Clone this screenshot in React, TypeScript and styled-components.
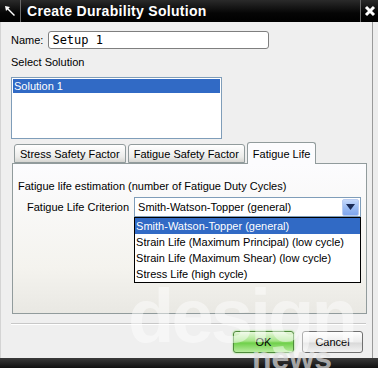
import React from "react";
import styled, { createGlobalStyle } from "styled-components";

const Global = createGlobalStyle`
  html, body { margin: 0; padding: 0; background: #ededed; }
  body { font-family: "Liberation Sans", Arial, sans-serif; }
`;

const Window = styled.div`
  position: relative;
  width: 378px;
  height: 368px;
  display: flex;
  flex-direction: column;
  overflow: hidden;
  background: #ededed;
  font-family: "Liberation Sans", Arial, sans-serif;
  font-size: 11px;
  color: #000;
`;

const TitleBar = styled.div`
  height: 22px;
  flex: none;
  display: flex;
  align-items: center;
  background: linear-gradient(#2a2a2a, #050505 60%, #000);
  color: #fff;
`;

const TitleIcon = styled.div`
  width: 20px;
  height: 22px;
  display: flex;
  align-items: center;
  justify-content: center;
  border-right: 1px solid #6a6a6a;
`;

const TitleText = styled.div`
  flex: 1;
  padding-left: 6px;
  font-family: "Liberation Sans", Arial, sans-serif;
  font-weight: bold;
  font-size: 14px;
  letter-spacing: 0.3px;
`;

const CloseBox = styled.div`
  width: 17px;
  height: 22px;
  display: flex;
  align-items: center;
  justify-content: center;
  border-left: 1px solid #6a6a6a;
`;

const Body = styled.div`
  flex: 1;
  display: flex;
  flex-direction: column;
  padding: 9px 0 0 10px;
  margin-right: 5px;
  border-left: 1px solid #d4d4d4;
  border-right: 1px solid #9a9a9a;
  background: #efefef;
`;

const Row = styled.div<{ $top?: number; $left?: number; $gap?: number }>`
  display: flex;
  align-items: center;
  gap: ${(p) => p.$gap ?? 4}px;
  margin-top: ${(p) => p.$top ?? 0}px;
  margin-left: ${(p) => p.$left ?? 0}px;
`;

const NameInput = styled.div`
  width: 216px;
  height: 16px;
  margin-left: 1px;
  border: 1px solid #7f7f7f;
  border-radius: 3px;
  background: #fff;
  font-family: "DejaVu Sans Mono", "Liberation Mono", monospace;
  font-size: 12px;
  line-height: 16px;
  padding-left: 3px;
`;

const Label = styled.div<{ $top?: number }>`
  margin-top: ${(p) => p.$top ?? 0}px;
  white-space: nowrap;
`;

const ListBox = styled.div`
  width: 207px;
  height: 58px;
  margin-top: 9px;
  border: 1px solid #7f9db9;
  background: #fff;
  padding: 1px;
`;

const ListItem = styled.div<{ $selected?: boolean }>`
  height: 14px;
  line-height: 14px;
  padding-left: 1px;
  background: ${(p) => (p.$selected ? "#316ac5" : "transparent")};
  color: ${(p) => (p.$selected ? "#fff" : "#000")};
`;

const TabStrip = styled.div`
  display: flex;
  align-items: flex-end;
  height: 21px;
  margin-top: 3px;
  padding-left: 3px;
  gap: 2px;
`;

const Tab = styled.div<{ $active?: boolean }>`
  height: ${(p) => (p.$active ? 21 : 17)}px;
  padding: 0 5px;
  display: flex;
  align-items: center;
  border: 1px solid #919b9c;
  border-bottom: ${(p) => (p.$active ? "none" : "1px solid #919b9c")};
  border-radius: 3px 3px 0 0;
  background: ${(p) =>
    p.$active ? "#fcfcfe" : "linear-gradient(#ffffff, #ececea 70%, #d6d6d2)"};
  margin-bottom: ${(p) => (p.$active ? -1 : 0)}px;
  position: relative;
  z-index: ${(p) => (p.$active ? 2 : 1)};
`;

const Panel = styled.div`
  position: relative;
  width: 355px;
  height: 151px;
  margin-left: 1px;
  border: 1px solid #919b9c;
  background: linear-gradient(#fcfcfe, #f4f3ee 70%, #e9e8e3);
  padding: 16px 0 0 5px;
  box-sizing: border-box;
`;

const ComboWrap = styled.div`
  position: relative;
`;

const Combo = styled.div`
  width: 227px;
  height: 20px;
  border: 1px solid #7f9db9;
  background: #fff;
  display: flex;
  align-items: center;
  justify-content: space-between;
  padding-left: 3px;
  box-sizing: border-box;
`;

const ComboButton = styled.div`
  width: 17px;
  height: 17px;
  margin-right: 1px;
  border-radius: 2px;
  background: linear-gradient(#c6d9fb, #9bbcf3 50%, #7fa6ee);
  border: 1px solid #b9ccf1;
  box-sizing: border-box;
  display: flex;
  align-items: center;
  justify-content: center;
`;

const DropList = styled.div`
  position: absolute;
  left: 0;
  top: 20px;
  width: 227px;
  border: 1px solid #000;
  background: #fff;
  box-sizing: border-box;
  z-index: 5;
`;

const DropItem = styled.div<{ $selected?: boolean }>`
  height: 16px;
  line-height: 16px;
  padding-left: 1px;
  white-space: nowrap;
  background: ${(p) => (p.$selected ? "#316ac5" : "#fff")};
  color: ${(p) => (p.$selected ? "#fff" : "#000")};
`;

const Separator = styled.div`
  width: 355px;
  height: 0;
  margin-top: 9px;
  border-top: 1px solid #c8c8c8;
  border-bottom: 1px solid #fff;
`;

const ButtonRow = styled.div`
  display: flex;
  justify-content: flex-end;
  gap: 8px;
  margin-top: 6px;
  padding-right: 9px;
`;

const Button = styled.div<{ $default?: boolean }>`
  width: 59px;
  height: 20px;
  border-radius: 3px;
  display: flex;
  align-items: center;
  justify-content: center;
  border: 1px solid ${(p) => (p.$default ? "#4f8a3c" : "#707070")};
  background: ${(p) =>
    p.$default
      ? "linear-gradient(#e6f7da, #a4e486 45%, #6fd04a 55%, #b8ec9e)"
      : "linear-gradient(#ffffff, #ececec 50%, #d9d9d9 55%, #f2f2f2)"};
  box-shadow: ${(p) => (p.$default ? "0 0 2px #7bdc55" : "none")};
`;

const BottomBar = styled.div`
  height: 10px;
  flex: none;
  background: linear-gradient(#3a3a3a, #111);
`;

/* faint site watermark that lies over the dialog */
const Watermark = styled.div`
  position: absolute;
  left: 128px;
  top: 278px;
  pointer-events: none;
  color: rgba(255, 255, 255, 0.45);
  font-family: "Liberation Sans", Arial, sans-serif;
  font-weight: bold;
  line-height: 1;
  z-index: 10;
`;

const WmBig = styled.div`
  font-size: 76px;
  letter-spacing: -3px;
`;

const WmSmall = styled.div`
  font-size: 32px;
  margin: -12px 0 0 124px;
  color: rgba(225, 225, 225, 0.7);
`;

export default function App() {
  return (
    <>
      <Global />
      <Window>
        <TitleBar>
          <TitleIcon>
            <svg width="12" height="12" viewBox="0 0 12 12">
              <path d="M1 1 L6 2 L4.5 3.5 L11 10 L10 11 L3.5 4.5 L2 6 Z" fill="#fff" />
            </svg>
          </TitleIcon>
          <TitleText>Create Durability Solution</TitleText>
          <CloseBox>
            <svg width="12" height="12" viewBox="0 0 12 12">
              <path d="M2 2 L10 10 M10 2 L2 10" stroke="#fff" strokeWidth="3" />
            </svg>
          </CloseBox>
        </TitleBar>
        <Body>
          <Row>
            <Label>Name:</Label>
            <NameInput>Setup 1</NameInput>
          </Row>
          <Label $top={7}>Select Solution</Label>
          <ListBox>
            <ListItem $selected>Solution 1</ListItem>
          </ListBox>
          <TabStrip>
            <Tab>Stress Safety Factor</Tab>
            <Tab>Fatigue Safety Factor</Tab>
            <Tab $active>Fatigue Life</Tab>
          </TabStrip>
          <Panel>
            <Label>Fatigue life estimation (number of Fatigue Duty Cycles)</Label>
            <Row $top={5} $left={9} $gap={5}>
              <Label>Fatigue Life Criterion</Label>
              <ComboWrap>
                <Combo>
                  Smith-Watson-Topper (general)
                  <ComboButton>
                    <svg width="9" height="6" viewBox="0 0 9 6">
                      <path d="M0 0 H9 L4.5 6 Z" fill="#1a2a55" />
                    </svg>
                  </ComboButton>
                </Combo>
                <DropList>
                  <DropItem $selected>Smith-Watson-Topper (general)</DropItem>
                  <DropItem>Strain Life (Maximum Principal) (low cycle)</DropItem>
                  <DropItem>Strain Life (Maximum Shear) (low cycle)</DropItem>
                  <DropItem>Stress Life (high cycle)</DropItem>
                </DropList>
              </ComboWrap>
            </Row>
          </Panel>
          <Separator />
          <ButtonRow>
            <Button $default>OK</Button>
            <Button>Cancel</Button>
          </ButtonRow>
        </Body>
        <BottomBar />
        <Watermark>
          <WmBig>design</WmBig>
          <WmSmall>news</WmSmall>
        </Watermark>
      </Window>
    </>
  );
}
